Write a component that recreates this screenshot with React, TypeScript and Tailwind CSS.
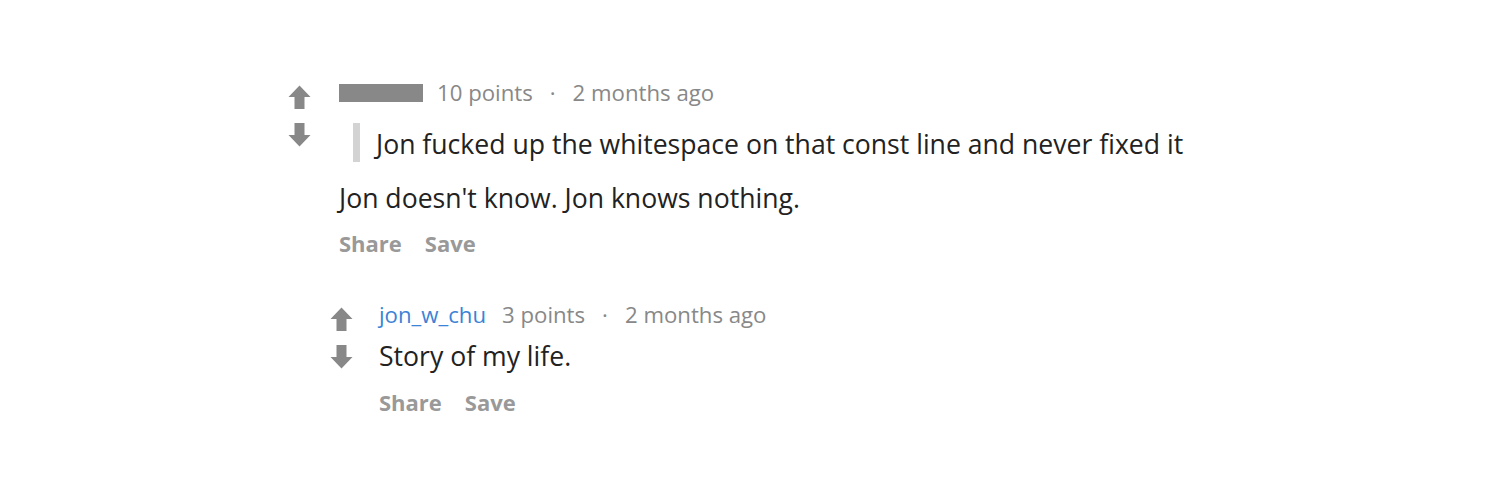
import React from "react";

function Arrow({ down = false }: { down?: boolean }) {
  return (
    <svg
      width="23"
      height="24"
      viewBox="0 0 23 24"
      className={down ? "rotate-180" : ""}
      fill="#888888"
    >
      <path d="M11.5 0.5 L22.5 12 L16.5 12 L16.5 24 L6.5 24 L6.5 12 L0.5 12 Z" />
    </svg>
  );
}

function Votes({ top }: { top: string }) {
  return (
    <div className={`flex flex-col gap-[14px] ${top}`}>
      <Arrow />
      <Arrow down />
    </div>
  );
}

function Actions() {
  return (
    <div className="flex gap-[23px] text-[22px] font-bold leading-[30px] text-[#999999]">
      <span>Share</span>
      <span>Save</span>
    </div>
  );
}

function Meta({ points }: { points: string }) {
  return (
    <>
      <span className="text-[#888888]">{points}</span>
      <span className="mx-[17px] text-[#888888]">·</span>
      <span className="text-[#888888]">2 months ago</span>
    </>
  );
}

export default function App() {
  return (
    <div
      className="min-h-[500px] w-[1500px] bg-white text-[#222222]"
      style={{ fontFamily: '"Open Sans", "Noto Sans", sans-serif' }}
    >
      <div className="flex gap-[28px] pl-[288px] pt-[78px]">
        <Votes top="pt-[7px]" />
        <div className="flex flex-col">
          <div className="flex items-center text-[22.2px] leading-[30px]">
            <span className="mr-[14px] inline-block h-[18px] w-[84px] bg-[#888888]" />
            <Meta points="10 points" />
          </div>
          <div className="mt-[15px] ml-[14px] flex items-center gap-[16px]">
            <span className="h-[39px] w-[7px] bg-[#d3d3d3]" />
            <span className="pt-[3px] text-[26.6px] leading-[36px]">
              Jon fucked up the whitespace on that const line and never fixed it
            </span>
          </div>
          <p className="mt-[18px] text-[26.6px] leading-[36px]">
            Jon doesn't know. Jon knows nothing.
          </p>
          <div className="mt-[12px]">
            <Actions />
          </div>

          <div className="mt-[42px] -ml-[9px] flex gap-[26px]">
            <Votes top="pt-[7px]" />
            <div className="flex flex-col">
              <div className="flex items-center text-[22.2px] leading-[30px]">
                <span className="mr-[16px] text-[#3a83d6]">jon_w_chu</span>
                <Meta points="3 points" />
              </div>
              <p className="mt-[8px] text-[26.6px] leading-[36px]">Story of my life.</p>
              <div className="mt-[13px]">
                <Actions />
              </div>
            </div>
          </div>
        </div>
      </div>
    </div>
  );
}
